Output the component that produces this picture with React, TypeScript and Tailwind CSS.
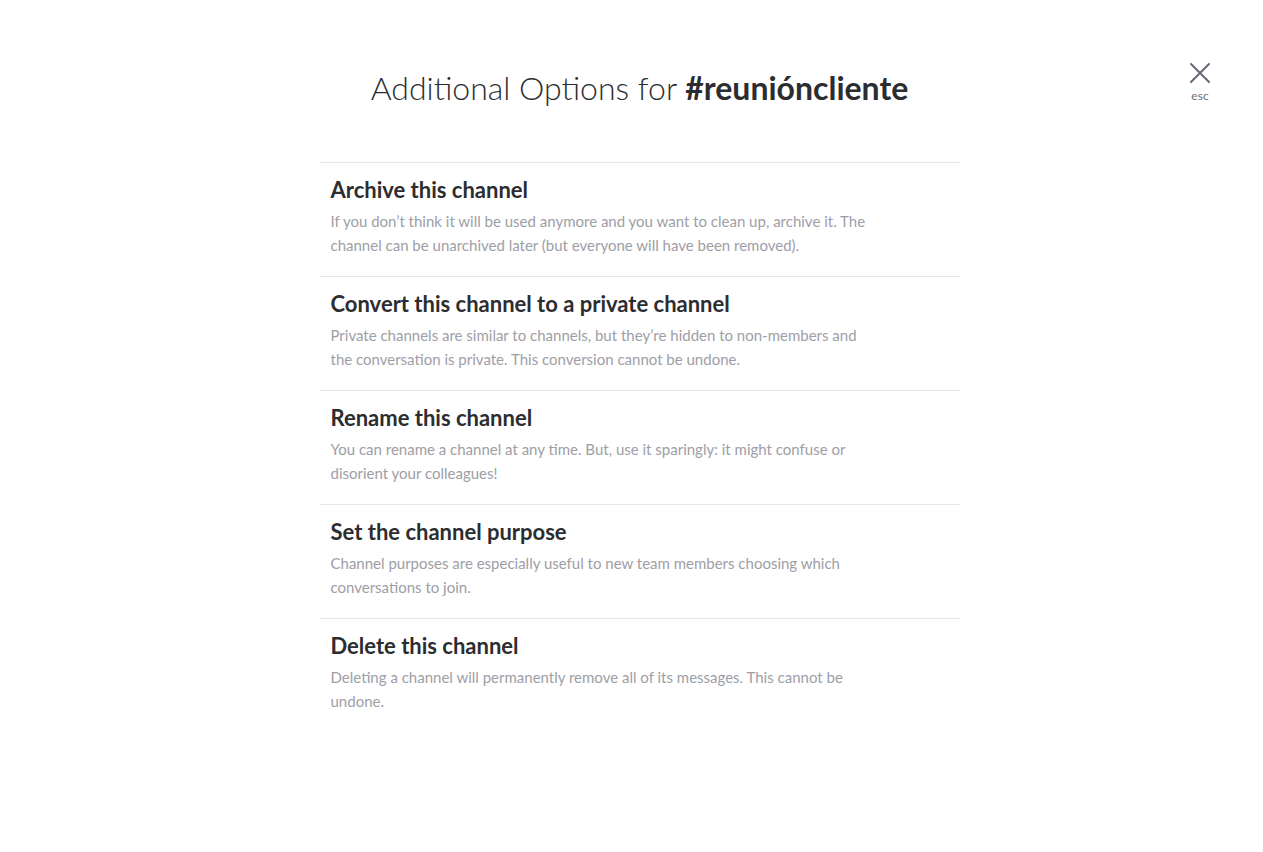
const OPTIONS = [
  {
    title: 'Archive this channel',
    text: 'If you don’t think it will be used anymore and you want to clean up, archive it. The channel can be unarchived later (but everyone will have been removed).',
  },
  {
    title: 'Convert this channel to a private channel',
    text: 'Private channels are similar to channels, but they’re hidden to non-members and the conversation is private. This conversion cannot be undone.',
  },
  {
    title: 'Rename this channel',
    text: 'You can rename a channel at any time. But, use it sparingly: it might confuse or disorient your colleagues!',
  },
  {
    title: 'Set the channel purpose',
    text: 'Channel purposes are especially useful to new team members choosing which conversations to join.',
  },
  {
    title: 'Delete this channel',
    text: 'Deleting a channel will permanently remove all of its messages. This cannot be undone.',
  },
]

export default function App() {
  return (
    <div className="min-h-[852px] w-full bg-white font-['Lato','Noto_Sans',sans-serif] text-[#2c2d30]">
      {/* close button */}
      <div className="flex justify-end pr-[49px] pt-[63px]">
        <button className="flex w-[28px] flex-col items-center text-[#646a78]">
          <svg width="20" height="20" viewBox="0 0 20 20" fill="none" stroke="currentColor" strokeWidth="2" strokeLinecap="round">
            <path d="M1 1 L19 19 M19 1 L1 19" />
          </svg>
          <span className="mt-[6px] text-[12px] leading-[14px] text-[#717274]">esc</span>
        </button>
      </div>

      <div className="pl-[16px]">
        <h1 className="-mt-[37px] text-center text-[32px] font-light leading-[44px]">
          Additional Options for <span className="font-bold">#reunióncliente</span>
        </h1>

        <div className="mx-auto mt-[52px] w-[640px] border-t border-[#e8e8e8]">
          {OPTIONS.map((opt) => (
            <div key={opt.title} className="border-b border-[#e8e8e8] px-[11px] pb-[19px] pt-[14px] last:border-b-0">
              <h2 className="text-[22px] font-bold leading-[26px] text-[#2c2d30]">{opt.title}</h2>
              <p className="mt-[6px] max-w-[545px] text-[15px] leading-[24px] text-[#9e9ea6]">{opt.text}</p>
            </div>
          ))}
        </div>
      </div>
    </div>
  )
}
